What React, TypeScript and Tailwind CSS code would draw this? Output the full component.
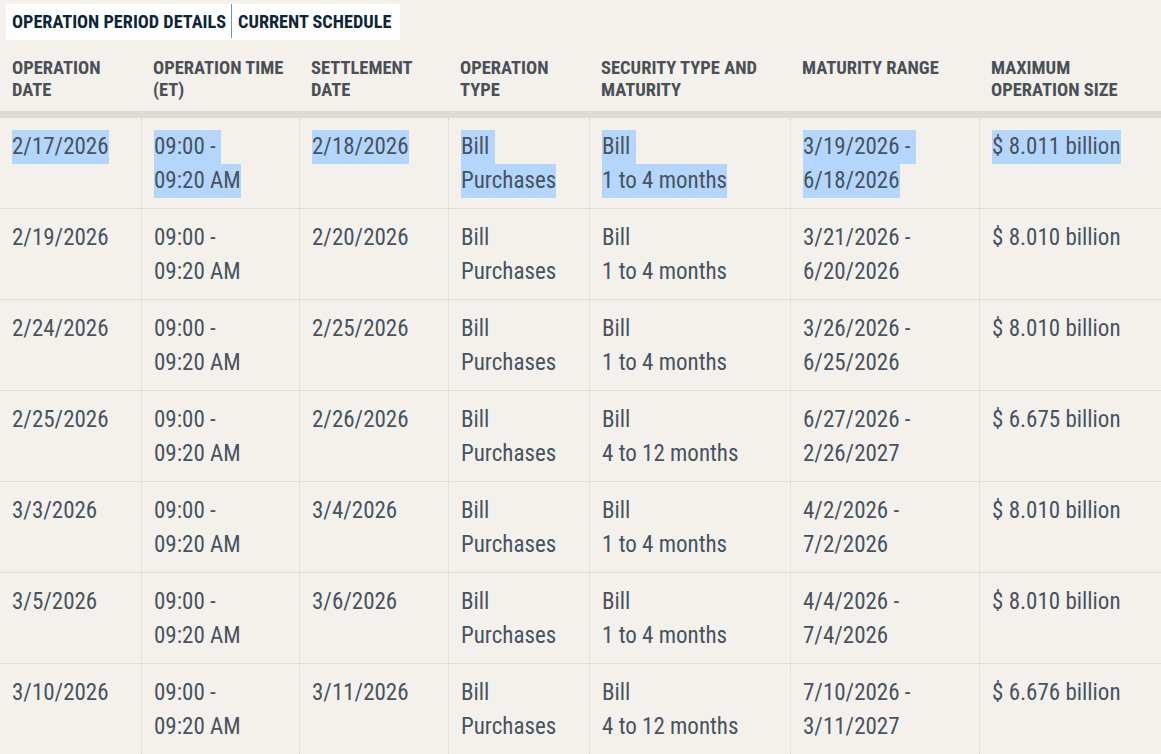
import React from "react";

type Row = {
  date: string;
  time: [string, string];
  settle: string;
  type: [string, string];
  security: [string, string];
  range: [string, string];
  size: string;
};

const rows: Row[] = [
  { date: "2/17/2026", time: ["09:00 -", "09:20 AM"], settle: "2/18/2026", type: ["Bill", "Purchases"], security: ["Bill", "1 to 4 months"], range: ["3/19/2026 -", "6/18/2026"], size: "$ 8.011 billion" },
  { date: "2/19/2026", time: ["09:00 -", "09:20 AM"], settle: "2/20/2026", type: ["Bill", "Purchases"], security: ["Bill", "1 to 4 months"], range: ["3/21/2026 -", "6/20/2026"], size: "$ 8.010 billion" },
  { date: "2/24/2026", time: ["09:00 -", "09:20 AM"], settle: "2/25/2026", type: ["Bill", "Purchases"], security: ["Bill", "1 to 4 months"], range: ["3/26/2026 -", "6/25/2026"], size: "$ 8.010 billion" },
  { date: "2/25/2026", time: ["09:00 -", "09:20 AM"], settle: "2/26/2026", type: ["Bill", "Purchases"], security: ["Bill", "4 to 12 months"], range: ["6/27/2026 -", "2/26/2027"], size: "$ 6.675 billion" },
  { date: "3/3/2026", time: ["09:00 -", "09:20 AM"], settle: "3/4/2026", type: ["Bill", "Purchases"], security: ["Bill", "1 to 4 months"], range: ["4/2/2026 -", "7/2/2026"], size: "$ 8.010 billion" },
  { date: "3/5/2026", time: ["09:00 -", "09:20 AM"], settle: "3/6/2026", type: ["Bill", "Purchases"], security: ["Bill", "1 to 4 months"], range: ["4/4/2026 -", "7/4/2026"], size: "$ 8.010 billion" },
  { date: "3/10/2026", time: ["09:00 -", "09:20 AM"], settle: "3/11/2026", type: ["Bill", "Purchases"], security: ["Bill", "4 to 12 months"], range: ["7/10/2026 -", "3/11/2027"], size: "$ 6.676 billion" },
];

const headers: string[][] = [
  ["OPERATION", "DATE"],
  ["OPERATION TIME", "(ET)"],
  ["SETTLEMENT", "DATE"],
  ["OPERATION", "TYPE"],
  ["SECURITY TYPE AND", "MATURITY"],
  ["MATURITY RANGE"],
  ["MAXIMUM", "OPERATION SIZE"],
];

const grid = "grid grid-cols-[141px_158px_149px_141px_201px_189px_182px]";

function Lines({ lines, selected }: { lines: string[]; selected: boolean }) {
  return (
    <>
      {lines.map((l, i) => (
        <div key={i} className="h-[34px]">
          <span className={selected ? "inline-block whitespace-pre bg-[#b4d6fd]" : "inline-block whitespace-pre"}>
            {selected && i < lines.length - 1 ? l + " " : l}
          </span>
        </div>
      ))}
    </>
  );
}

export default function App() {
  return (
    <div
      className="min-h-screen w-[1161px] overflow-hidden bg-[#f4f1ed] pt-1"
      style={{ fontFamily: '"Roboto Condensed", Roboto, "Liberation Sans Narrow", sans-serif' }}
    >
      {/* tabs */}
      <div className="ml-[6px] flex h-9 w-[394px] items-center bg-white text-[18.25px] font-bold text-[#0d2536] font-stretch-condensed">
        <span className="pl-[6px] pr-[5px]">OPERATION PERIOD DETAILS</span>
        <span className="h-[34px] w-px self-start bg-[#6b98b9]" />
        <span className="pl-[6px]">CURRENT SCHEDULE</span>
      </div>

      {/* header */}
      <div className={`${grid} mt-[17px] border-b-[7px] border-[#dedbd6] pb-[10px] text-[18.5px] font-bold leading-[22px] text-[#4a5056] font-stretch-condensed`}>
        {headers.map((h, i) => (
          <div key={i} className="pl-3">
            {h.map((l) => (
              <div key={l}>{l}</div>
            ))}
          </div>
        ))}
      </div>

      {/* body */}
      <div className="text-[23px] leading-[34px] text-[#47535e] font-stretch-condensed">
        {rows.map((r, idx) => {
          const sel = idx === 0;
          const cells: string[][] = [[r.date], r.time, [r.settle], r.type, r.security, r.range, [r.size]];
          return (
            <div key={idx} className={`${grid} border-b border-[#e1ded9]`}>
              {cells.map((c, i) => (
                <div
                  key={i}
                  className={`pl-3 pt-3 pb-[10px] ${i > 0 ? "border-l border-dotted border-[#dcd9d3]" : ""}`}
                >
                  <Lines lines={c} selected={sel} />
                </div>
              ))}
            </div>
          );
        })}
      </div>
    </div>
  );
}
